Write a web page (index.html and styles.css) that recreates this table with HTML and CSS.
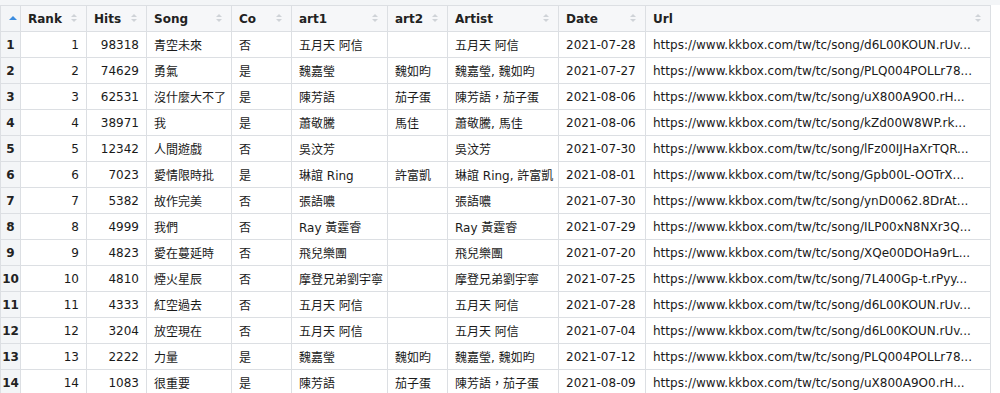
FILE: index.html
```html
<!DOCTYPE html>
<html>
<head>
<meta charset="utf-8">
<link rel="stylesheet" href="styles.css">
</head>
<body>
<div class="viewer">
<table class="grid">
<colgroup>
<col class="c-rn"><col class="c-rank"><col class="c-hits"><col class="c-song"><col class="c-co"><col class="c-art1"><col class="c-art2"><col class="c-artist"><col class="c-date"><col class="c-url">
</colgroup>
<thead>
<tr>
<th class="rn-head"><span class="sorted"></span></th>
<th><span class="hd">Rank</span><span class="sort"></span></th>
<th><span class="hd">Hits</span><span class="sort"></span></th>
<th><span class="hd">Song</span><span class="sort"></span></th>
<th><span class="hd">Co</span><span class="sort"></span></th>
<th><span class="hd">art1</span><span class="sort"></span></th>
<th><span class="hd">art2</span><span class="sort"></span></th>
<th><span class="hd">Artist</span><span class="sort"></span></th>
<th><span class="hd">Date</span><span class="sort"></span></th>
<th><span class="hd">Url</span><span class="sort"></span></th>
</tr>
</thead>
<tbody>
<tr><td class="rn">1</td><td class="num">1</td><td class="num">98318</td><td>青空未來</td><td>否</td><td>五月天 阿信</td><td></td><td>五月天 阿信</td><td>2021-07-28</td><td>https://www.kkbox.com/tw/tc/song/d6L00KOUN.rUv...</td></tr>
<tr><td class="rn">2</td><td class="num">2</td><td class="num">74629</td><td>勇氣</td><td>是</td><td>魏嘉瑩</td><td>魏如昀</td><td>魏嘉瑩, 魏如昀</td><td>2021-07-27</td><td>https://www.kkbox.com/tw/tc/song/PLQ004POLLr78...</td></tr>
<tr><td class="rn">3</td><td class="num">3</td><td class="num">62531</td><td>沒什麼大不了</td><td>是</td><td>陳芳語</td><td>茄子蛋</td><td>陳芳語，茄子蛋</td><td>2021-08-06</td><td>https://www.kkbox.com/tw/tc/song/uX800A9O0.rH...</td></tr>
<tr><td class="rn">4</td><td class="num">4</td><td class="num">38971</td><td>我</td><td>是</td><td>蕭敬騰</td><td>馬佳</td><td>蕭敬騰, 馬佳</td><td>2021-08-06</td><td>https://www.kkbox.com/tw/tc/song/kZd00W8WP.rk...</td></tr>
<tr><td class="rn">5</td><td class="num">5</td><td class="num">12342</td><td>人間遊戲</td><td>否</td><td>吳汶芳</td><td></td><td>吳汶芳</td><td>2021-07-30</td><td>https://www.kkbox.com/tw/tc/song/lFz00IJHaXrTQR...</td></tr>
<tr><td class="rn">6</td><td class="num">6</td><td class="num">7023</td><td>愛情限時批</td><td>是</td><td>琳誼 Ring</td><td>許富凱</td><td>琳誼 Ring, 許富凱</td><td>2021-08-01</td><td>https://www.kkbox.com/tw/tc/song/Gpb00L-OOTrX...</td></tr>
<tr><td class="rn">7</td><td class="num">7</td><td class="num">5382</td><td>故作完美</td><td>否</td><td>張語噥</td><td></td><td>張語噥</td><td>2021-07-30</td><td>https://www.kkbox.com/tw/tc/song/ynD0062.8DrAt...</td></tr>
<tr><td class="rn">8</td><td class="num">8</td><td class="num">4999</td><td>我們</td><td>否</td><td>Ray 黃霆睿</td><td></td><td>Ray 黃霆睿</td><td>2021-07-29</td><td>https://www.kkbox.com/tw/tc/song/ILP00xN8NXr3Q...</td></tr>
<tr><td class="rn">9</td><td class="num">9</td><td class="num">4823</td><td>愛在蔓延時</td><td>否</td><td>飛兒樂團</td><td></td><td>飛兒樂團</td><td>2021-07-20</td><td>https://www.kkbox.com/tw/tc/song/XQe00DOHa9rL...</td></tr>
<tr><td class="rn">10</td><td class="num">10</td><td class="num">4810</td><td>煙火星辰</td><td>否</td><td>摩登兄弟劉宇寧</td><td></td><td>摩登兄弟劉宇寧</td><td>2021-07-25</td><td>https://www.kkbox.com/tw/tc/song/7L400Gp-t.rPyy...</td></tr>
<tr><td class="rn">11</td><td class="num">11</td><td class="num">4333</td><td>紅空過去</td><td>否</td><td>五月天 阿信</td><td></td><td>五月天 阿信</td><td>2021-07-28</td><td>https://www.kkbox.com/tw/tc/song/d6L00KOUN.rUv...</td></tr>
<tr><td class="rn">12</td><td class="num">12</td><td class="num">3204</td><td>放空現在</td><td>否</td><td>五月天 阿信</td><td></td><td>五月天 阿信</td><td>2021-07-04</td><td>https://www.kkbox.com/tw/tc/song/d6L00KOUN.rUv...</td></tr>
<tr><td class="rn">13</td><td class="num">13</td><td class="num">2222</td><td>力量</td><td>是</td><td>魏嘉瑩</td><td>魏如昀</td><td>魏嘉瑩, 魏如昀</td><td>2021-07-12</td><td>https://www.kkbox.com/tw/tc/song/PLQ004POLLr78...</td></tr>
<tr><td class="rn">14</td><td class="num">14</td><td class="num">1083</td><td>很重要</td><td>是</td><td>陳芳語</td><td>茄子蛋</td><td>陳芳語，茄子蛋</td><td>2021-08-09</td><td>https://www.kkbox.com/tw/tc/song/uX800A9O0.rH...</td></tr>
</tbody>
</table>
</div>
</body>
</html>
```

FILE: styles.css
```css
html, body {
  margin: 0;
  padding: 0;
  background: #ffffff;
}
.viewer {
  padding-top: 5px;
  background: linear-gradient(#f3f5f7, #f3f5f7) top / 100% 5px no-repeat;
  font-family: "DejaVu Sans", "Noto Sans CJK TC", sans-serif;
  font-size: 12px;
  color: #1a1a1a;
  height: 388px;
  overflow: hidden;
}
.grid {
  border-collapse: collapse;
  table-layout: fixed;
  width: 990px;
}
.c-rn { width: 20px; }
.c-rank { width: 66px; }
.c-hits { width: 60px; }
.c-song { width: 85px; }
.c-co { width: 60px; }
.c-art1 { width: 96px; }
.c-art2 { width: 60px; }
.c-artist { width: 111px; }
.c-date { width: 87px; }
.c-url { width: 345px; }

th, td {
  border: 1px solid #dcdfe3;
  height: 25px;
  padding: 0 7px;
  white-space: nowrap;
  overflow: hidden;
  text-align: left;
  box-sizing: border-box;
}
thead tr { height: 26px; }
tbody tr { height: 26px; }
th {
  background: #f6f7f9;
  font-weight: bold;
  font-size: 12px;
  position: relative;
  color: #222;
}
.hd { vertical-align: middle; }
.sort {
  position: absolute;
  right: 8px;
  top: 8px;
  width: 7px;
  height: 10px;
}
.sort::before, .sort::after {
  content: "";
  position: absolute;
  left: 0;
  border-left: 3px solid transparent;
  border-right: 3px solid transparent;
}
.sort::before {
  top: 0;
  border-bottom: 3px solid #cfd3d8;
}
.sort::after {
  top: 5px;
  border-top: 3px solid #cfd3d8;
}
.rn-head {
  padding: 0;
  background: #f3f5f7;
}
.sorted {
  position: absolute;
  left: 8px;
  top: 10px;
  border-left: 4px solid transparent;
  border-right: 4px solid transparent;
  border-bottom: 4px solid #3c8de0;
}
td.rn {
  background: #f3f5f7;
  font-weight: bold;
  text-align: center;
  padding: 0;
  color: #222;
}
td.num { text-align: right; }
```
